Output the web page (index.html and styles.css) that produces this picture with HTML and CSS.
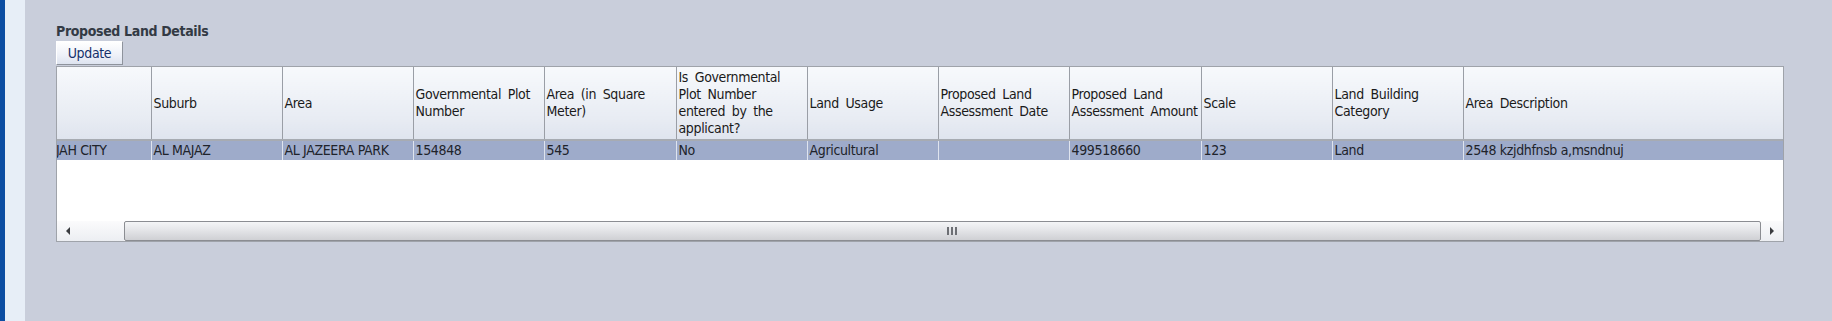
FILE: index.html
```html
<!DOCTYPE html>
<html>
<head>
<meta charset="utf-8">
<title>Proposed Land Details</title>
<link rel="stylesheet" href="styles.css">
</head>
<body>
<div class="shell">
  <div class="brand-bar"></div>
  <div class="side-strip"></div>
  <main class="panel">
    <h2 class="panel-title">Proposed Land Details</h2>
    <button class="btn" type="button">Update</button>
    <div class="grid">
      <table class="grid-table">
        <colgroup>
          <col style="width:94px">
          <col style="width:131px">
          <col style="width:131px">
          <col style="width:131px">
          <col style="width:132px">
          <col style="width:131px">
          <col style="width:131px">
          <col style="width:131px">
          <col style="width:132px">
          <col style="width:131px">
          <col style="width:131px">
          <col style="width:320px">
        </colgroup>
        <thead>
          <tr>
            <th></th>
            <th>Suburb</th>
            <th>Area</th>
            <th>Governmental Plot Number</th>
            <th>Area (in Square Meter)</th>
            <th>Is Governmental Plot Number entered by the applicant?</th>
            <th>Land Usage</th>
            <th>Proposed Land Assessment Date</th>
            <th>Proposed Land Assessment Amount</th>
            <th>Scale</th>
            <th>Land Building Category</th>
            <th>Area Description</th>
          </tr>
        </thead>
        <tbody>
          <tr class="selected">
            <td class="clip"><span>JAH CITY</span></td>
            <td>AL MAJAZ</td>
            <td>AL JAZEERA PARK</td>
            <td>154848</td>
            <td>545</td>
            <td>No</td>
            <td>Agricultural</td>
            <td></td>
            <td>499518660</td>
            <td>123</td>
            <td>Land</td>
            <td>2548 kzjdhfnsb a,msndnuj</td>
          </tr>
        </tbody>
      </table>
      <div class="grid-fill"></div>
      <div class="hscroll">
        <div class="hscroll-left"><span class="arrow arrow-left"></span></div>
        <div class="hscroll-thumb"><span class="grip"><i></i><i></i><i></i></span></div>
        <div class="hscroll-right"><span class="arrow arrow-right"></span></div>
      </div>
    </div>
  </main>
</div>
</body>
</html>
```

FILE: styles.css
```css
html, body {
  margin: 0;
  padding: 0;
  height: 100%;
}

body {
  background: #c9cedb;
  font-family: "DejaVu Sans Condensed", "DejaVu Sans", sans-serif;
  font-stretch: condensed;
  font-size: 14px;
  letter-spacing: -0.35px;
  color: #1c1c1c;
}

.shell {
  display: flex;
  min-height: 321px;
}

.brand-bar {
  width: 5px;
  flex: none;
  background: #0c4da2;
}

.side-strip {
  width: 20px;
  flex: none;
  background: #e7eef7;
}

.panel {
  flex: 1;
  padding: 22px 0 0 31px;
}

.panel-title {
  margin: 0;
  font-size: 14px;
  font-weight: bold;
  color: #333a44;
  line-height: 18px;
}

.btn {
  display: block;
  margin: 1px 0 0 0;
  width: 67px;
  height: 24px;
  padding: 0;
  font-family: inherit;
  font-stretch: condensed;
  font-size: 14px;
  letter-spacing: -0.35px;
  color: #14306a;
  background: linear-gradient(#ffffff, #eef1f8 60%, #dde3ef);
  border: 1px solid #ffffff;
  border-right-color: #8e939c;
  border-bottom-color: #8e939c;
}

.grid {
  width: 1726px;
  margin-top: 1px;
  border: 1px solid #9fa3aa;
  background: #ffffff;
}

.grid-table {
  table-layout: fixed;
  border-collapse: collapse;
  width: 1726px;
}

.grid-table th {
  height: 72px;
  padding: 0 1px 0 2px;
  text-align: left;
  vertical-align: middle;
  font-weight: normal;
  line-height: 17px;
  word-spacing: 3px;
  color: #1a1a1a;
  background: linear-gradient(#f7f9fc, #e8ecf3 70%, #dfe4ee);
  border-left: 1px solid #9a9ea6;
  border-bottom: 2px solid #a7abb2;
}

.grid-table th:first-child {
  border-left: none;
}

.grid-table td {
  height: 19px;
  padding: 0 2px;
  line-height: 19px;
  white-space: nowrap;
  overflow: hidden;
  color: #20232a;
  border-left: 1px solid #dfe4ee;
}

.grid-table td:first-child {
  border-left: none;
}

.selected td {
  background: #9eabca;
}

.clip span {
  display: inline-block;
  margin-left: -3px;
}

.grid-fill {
  height: 61px;
}

.hscroll {
  display: flex;
  height: 20px;
}

.hscroll-left {
  width: 67px;
  flex: none;
  display: flex;
  align-items: center;
  padding-left: 9px;
  box-sizing: border-box;
  background: linear-gradient(#fbfbfc, #eceef2);
}

.hscroll-thumb {
  flex: 1;
  position: relative;
  box-sizing: border-box;
  border: 1px solid #8b8d92;
  border-radius: 2px;
  background: linear-gradient(#f4f5f7, #e6e7ea 40%, #cfd0d4);
  display: flex;
  align-items: center;
  justify-content: center;
}

.grip {
  display: flex;
  gap: 2px;
  margin-left: 18px;
}

.grip i {
  width: 2px;
  height: 8px;
  background: #6d6f74;
}

.hscroll-right {
  width: 22px;
  flex: none;
  display: flex;
  align-items: center;
  padding-left: 9px;
  box-sizing: border-box;
  background: linear-gradient(#fbfbfc, #eceef2);
}

.arrow {
  width: 0;
  height: 0;
  border-top: 4px solid transparent;
  border-bottom: 4px solid transparent;
}

.arrow-left {
  border-right: 4px solid #3a3c40;
}

.arrow-right {
  border-left: 4px solid #3a3c40;
}
```
